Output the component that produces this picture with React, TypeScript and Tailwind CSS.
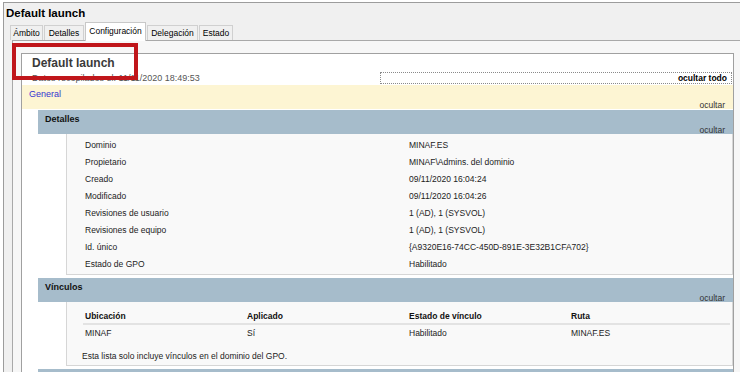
const TABS = [
  { label: "Ámbito", w: "w-[33px]" },
  { label: "Detalles", w: "w-[40px]" },
  { label: "Configuración", w: "w-[61px]", active: true },
  { label: "Delegación", w: "w-[51px]" },
  { label: "Estado", w: "w-[34px]" },
];

const DETAILS: [string, string][] = [
  ["Dominio", "MINAF.ES"],
  ["Propietario", "MINAF\\Admins. del dominio"],
  ["Creado", "09/11/2020 16:04:24"],
  ["Modificado", "09/11/2020 16:04:26"],
  ["Revisiones de usuario", "1 (AD), 1 (SYSVOL)"],
  ["Revisiones de equipo", "1 (AD), 1 (SYSVOL)"],
  ["Id. único", "{A9320E16-74CC-450D-891E-3E32B1CFA702}"],
  ["Estado de GPO", "Habilitado"],
];

const LINK_COLS = ["Ubicación", "Aplicado", "Estado de vínculo", "Ruta"];
const LINK_ROW = ["MINAF", "Sí", "Habilitado", "MINAF.ES"];

function SectionBar({ title }: { title: string }) {
  return (
    <div className="ml-[16px] h-[24px] bg-[#a6bccb] flex flex-col justify-between pt-[3px]">
      <div className="pl-[7px] text-[9px] font-bold leading-[12px] text-[#111]">{title}</div>
      <div className="pr-[8px] text-right text-[8.5px] leading-[10px] text-[#333]">ocultar</div>
    </div>
  );
}

export default function App() {
  return (
    <div className="relative w-[740px] h-[372px] overflow-hidden bg-white font-['Liberation_Sans',Arial,sans-serif] text-black">
      <div className="ml-[3px] mt-[2px] h-[400px] border-l border-t border-[#9c9c9c] bg-[#f0f0f0]">
        <div className="pl-[2px] pt-[2px] h-[19px] text-[11.5px] font-bold leading-[16px]">Default launch</div>

        {/* tabs */}
        <div className="flex items-end h-[18px] pl-[6px] gap-[1px]">
          {TABS.map((t) =>
            t.active ? (
              <div
                key={t.label}
                className={`${t.w} h-[19px] -mb-[1px] relative z-10 bg-white border border-b-0 border-[#c8c8c8] text-[8.5px] leading-[16px] text-center`}
              >
                {t.label}
              </div>
            ) : (
              <div
                key={t.label}
                className={`${t.w} h-[15px] bg-[#f0f0f0] border border-b-0 border-[#d0d0d0] text-[8.5px] leading-[14px] text-center`}
              >
                {t.label}
              </div>
            )
          )}
        </div>

        {/* tab panel */}
        <div className="ml-[8px] border-l border-t border-[#a9a9a9] bg-[#f7f7f7] pl-[8px] pt-[12px] h-[340px]">
          <div className="w-[713px] h-[330px] border border-[#a0a0a0] bg-white">
            <div className="pl-[10px] pt-[2px] text-[12px] font-bold leading-[14px] text-[#3a3a3a]">Default launch</div>
            <div className="flex items-center justify-between h-[15px] pr-[1px]">
              <div className="pl-[10px] text-[9px] leading-[12px] text-[#555]">Datos recopilados el: 11/11/2020 18:49:53</div>
              <div className="w-[352px] h-[12px] border border-dotted border-[#8a8a8a] text-right pr-[4px] text-[8.5px] font-bold leading-[10px]">
                ocultar todo
              </div>
            </div>

            {/* General */}
            <div className="h-[24px] bg-[#fdf5d3] flex flex-col justify-between pt-[3px]">
              <div className="pl-[7px] text-[9px] leading-[12px] text-[#3535d0]">General</div>
              <div className="pr-[8px] text-right text-[8.5px] leading-[10px] text-[#333]">ocultar</div>
            </div>

            <div className="mt-[1px]">
              <SectionBar title="Detalles" />
              <div className="ml-[44px] border-l border-r border-b border-[#d6d6d6] bg-[#f9f9f9] pt-[3px] pb-[1px]">
                {DETAILS.map(([k, v]) => (
                  <div key={k} className="grid grid-cols-[324px_1fr] pl-[18px] text-[8.5px] leading-[17px] text-[#222]">
                    <span>{k}</span>
                    <span>{v}</span>
                  </div>
                ))}
              </div>
            </div>

            <div className="mt-[3px]">
              <SectionBar title="Vínculos" />
              <div className="ml-[44px] h-[64px] border-l border-r border-b border-[#d6d6d6] bg-[#f9f9f9] pt-[7px]">
                <div className="ml-[16px] mr-[2px]">
                  <div className="grid grid-cols-[162px_162px_162px_1fr] border-b-2 border-[#e3e3e3] text-[8.5px] font-bold leading-[14px] text-[#111]">
                    {LINK_COLS.map((c) => (
                      <span key={c} className="pl-[2px]">{c}</span>
                    ))}
                  </div>
                  <div className="grid grid-cols-[162px_162px_162px_1fr] pt-[1px] text-[8.5px] leading-[14px] text-[#222]">
                    {LINK_ROW.map((c, i) => (
                      <span key={i} className="pl-[2px]">{c}</span>
                    ))}
                  </div>
                </div>
                <div className="pl-[15px] mt-[10px] text-[8.5px] leading-[12px] text-[#222]">
                  Esta lista solo incluye vínculos en el dominio del GPO.
                </div>
              </div>
            </div>

            <div className="mt-[3px] ml-[16px] h-[20px] bg-[#a6bccb]" />
          </div>
        </div>
      </div>

      {/* red annotation box */}
      <div className="absolute left-[12px] top-[43px] w-[126px] h-[37px] border-4 border-[#c0161b]" />
    </div>
  );
}
